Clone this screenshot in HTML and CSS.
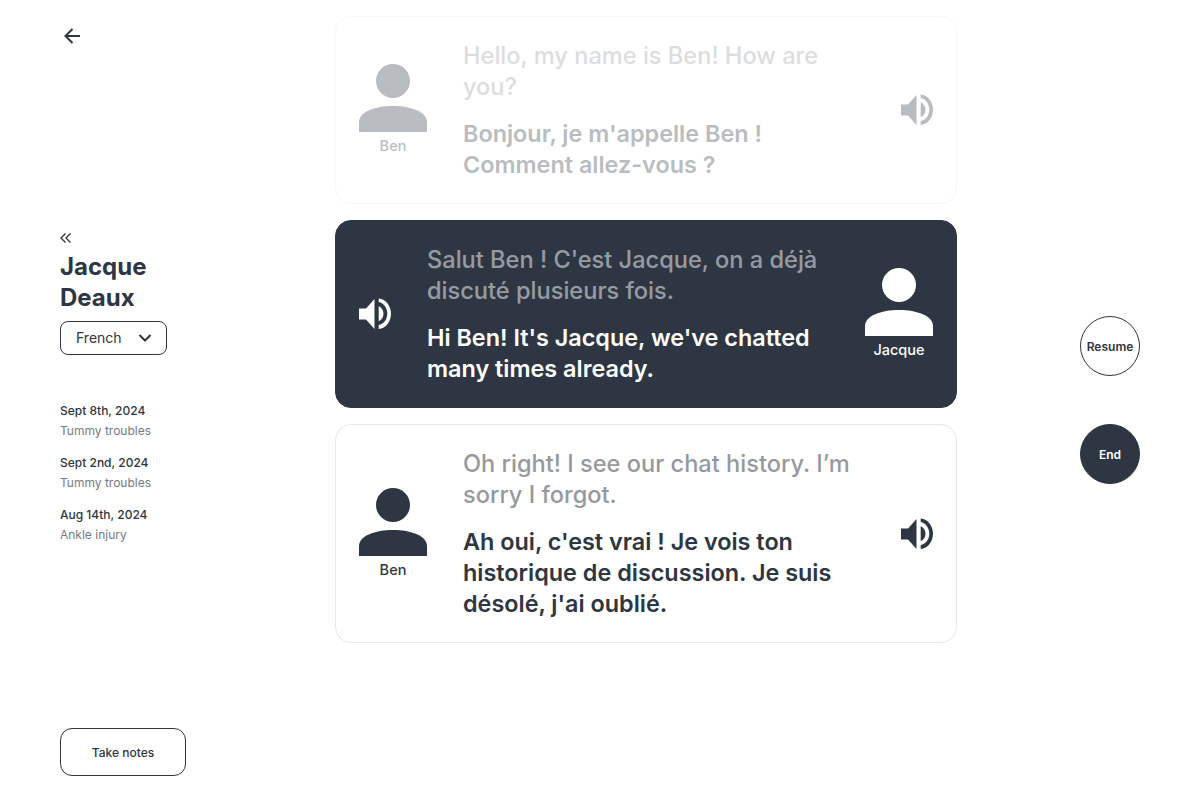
FILE: index.html
```html
<!DOCTYPE html>
<html lang="en">
<head>
    <meta charset="UTF-8">
    <title>Conversation</title>
    <link rel="stylesheet" href="styles.css">
</head>
<body>
    <div class="page">
        <aside class="sidebar">
            <button class="back-btn">
                <svg width="24" height="24" fill="none" stroke="currentColor" viewBox="0 0 24 24">
                    <path stroke-width="2" d="M20 12H5.500M12.500 5l-7 7 7 7"/>
                </svg>
            </button>

            <div class="patient">
                <svg class="collapse-icon" width="12" height="12" fill="none" stroke="currentColor" viewBox="0 0 12 12">
                    <path stroke-width="1.3" d="M5.500 1.500L1 6l4.500 4.500M10.500 1.500L6 6l4.500 4.500"/>
                </svg>
                <h2 class="patient-name">Jacque Deaux</h2>
                <button class="lang-select">
                    French
                    <svg width="14" height="8" fill="none" stroke="currentColor" viewBox="0 0 14 8">
                        <path stroke-width="2" d="M1.500 1L7 6.500 12.500 1"/>
                    </svg>
                </button>
                <div class="history">
                    <div class="history-item">
                        <div class="history-date">Sept 8th, 2024</div>
                        <div class="history-label">Tummy troubles</div>
                    </div>
                    <div class="history-item">
                        <div class="history-date">Sept 2nd, 2024</div>
                        <div class="history-label">Tummy troubles</div>
                    </div>
                    <div class="history-item">
                        <div class="history-date">Aug 14th, 2024</div>
                        <div class="history-label">Ankle injury</div>
                    </div>
                </div>
            </div>

            <button class="notes-btn">Take notes</button>
        </aside>

        <main class="chat">
            <!-- Ben, faded -->
            <div class="bubble faded">
                <div class="speaker">
                    <svg class="avatar" viewBox="0 0 68 68" fill="currentColor">
                        <circle cx="34" cy="17" r="17"/>
                        <path d="M0 68V58C0 48 16 42 34 42s34 6 34 16v10z"/>
                    </svg>
                    <div class="speaker-name">Ben</div>
                </div>
                <div class="bubble-text">
                    <p class="original">Hello, my name is Ben! How are you?</p>
                    <p class="translated">Bonjour, je m'appelle Ben ! Comment allez-vous ?</p>
                </div>
                <svg class="sound" viewBox="0 0 32 32" fill="currentColor">
                    <path d="M0 10.500h7L15.500 1v30L7 21.500H0z"/>
                    <path d="M19.700 8.200c3 1.400 4.800 4.300 4.800 7.500s-1.800 6.100-4.800 7.500z"/>
                    <path d="M19.700 .5C27 1 32 8 32 15.700S27 30.500 19.700 31v-4C25 26 28.300 21 28.300 15.700S25 5 19.700 4z"/>
                </svg>
            </div>

            <!-- Jacque, active -->
            <div class="bubble active">
                <svg class="sound" viewBox="0 0 32 32" fill="currentColor">
                    <path d="M0 10.500h7L15.500 1v30L7 21.500H0z"/>
                    <path d="M19.700 8.200c3 1.400 4.800 4.300 4.800 7.500s-1.800 6.100-4.800 7.500z"/>
                    <path d="M19.700 .5C27 1 32 8 32 15.700S27 30.500 19.700 31v-4C25 26 28.300 21 28.300 15.700S25 5 19.700 4z"/>
                </svg>
                <div class="bubble-text">
                    <p class="original">Salut Ben ! C'est Jacque, on a déjà discuté plusieurs fois.</p>
                    <p class="translated">Hi Ben! It's Jacque, we've chatted many times already.</p>
                </div>
                <div class="speaker">
                    <svg class="avatar" viewBox="0 0 68 68" fill="currentColor">
                        <circle cx="34" cy="17" r="17"/>
                        <path d="M0 68V58C0 48 16 42 34 42s34 6 34 16v10z"/>
                    </svg>
                    <div class="speaker-name">Jacque</div>
                </div>
            </div>

            <!-- Ben -->
            <div class="bubble">
                <div class="speaker">
                    <svg class="avatar" viewBox="0 0 68 68" fill="currentColor">
                        <circle cx="34" cy="17" r="17"/>
                        <path d="M0 68V58C0 48 16 42 34 42s34 6 34 16v10z"/>
                    </svg>
                    <div class="speaker-name">Ben</div>
                </div>
                <div class="bubble-text">
                    <p class="original">Oh right! I see our chat history. I’m sorry I forgot.</p>
                    <p class="translated">Ah oui, c'est vrai ! Je vois ton historique de discussion. Je suis désolé, j'ai oublié.</p>
                </div>
                <svg class="sound" viewBox="0 0 32 32" fill="currentColor">
                    <path d="M0 10.500h7L15.500 1v30L7 21.500H0z"/>
                    <path d="M19.700 8.200c3 1.400 4.800 4.300 4.800 7.500s-1.800 6.100-4.800 7.500z"/>
                    <path d="M19.700 .5C27 1 32 8 32 15.700S27 30.500 19.700 31v-4C25 26 28.300 21 28.300 15.700S25 5 19.700 4z"/>
                </svg>
            </div>
        </main>

        <div class="controls">
            <button class="round-btn">Resume</button>
            <button class="round-btn solid">End</button>
        </div>
    </div>
</body>
</html>
```

FILE: styles.css
```css
:root {
    --ink: #2d3642;
    --surface: #ffffff;
    --border: #e5e7ea;
}

* {
    margin: 0;
    padding: 0;
    box-sizing: border-box;
}

body {
    font-family: Inter, "Open Sans", sans-serif;
    background: var(--surface);
    color: var(--ink);
}

button {
    font-family: inherit;
    color: inherit;
    background: none;
    border: none;
    cursor: pointer;
}

.page {
    height: 800px;
    display: flex;
}

/* left column */
.sidebar {
    width: 335px;
    padding: 24px 0 24px 60px;
    display: flex;
    flex-direction: column;
    justify-content: space-between;
    align-items: flex-start;
}

.back-btn {
    width: 24px;
    height: 24px;
}

.collapse-icon {
    display: block;
    margin-bottom: 7px;
}

.patient-name {
    width: 120px;
    font-size: 24px;
    line-height: 31px;
    font-weight: 700;
}

.lang-select {
    width: 107px;
    height: 34px;
    margin-top: 8px;
    padding: 0 14px 0 15px;
    border: 1px solid var(--ink);
    border-radius: 8px;
    font-size: 14px;
    display: flex;
    justify-content: space-between;
    align-items: center;
}

.history {
    margin-top: 46px;
    display: flex;
    flex-direction: column;
    gap: 12px;
}

.history-date {
    font-size: 12px;
    line-height: 20px;
    font-weight: 500;
}

.history-label {
    font-size: 12px;
    line-height: 20px;
    color: #767b84;
}

.notes-btn {
    width: 126px;
    height: 48px;
    border: 1px solid var(--ink);
    border-radius: 12px;
    font-size: 12px;
    font-weight: 500;
}

/* conversation */
.chat {
    width: 622px;
    padding-top: 16px;
    display: flex;
    flex-direction: column;
    gap: 16px;
}

.bubble {
    padding: 23px;
    border: 1px solid var(--border);
    border-radius: 16px;
    display: flex;
    align-items: center;
    gap: 36px;
}

.bubble.faded {
    opacity: 0.33;
}

.bubble.active {
    background: var(--ink);
    border-color: var(--ink);
    color: white;
}

.speaker {
    width: 68px;
    flex-shrink: 0;
    text-align: center;
}

.avatar {
    display: block;
    width: 68px;
    height: 68px;
}

.speaker-name {
    margin-top: 4px;
    font-size: 14.500px;
    line-height: 20px;
    font-weight: 500;
}

.bubble-text {
    flex: 1;
}

.original {
    font-size: 23.600px;
    line-height: 31px;
    font-weight: 500;
    opacity: 0.5;
}

.translated {
    margin-top: 16px;
    font-size: 23.400px;
    line-height: 31px;
    font-weight: 600;
}

.sound {
    width: 32px;
    height: 32px;
    flex-shrink: 0;
}

/* right column */
.controls {
    margin-left: 123px;
    display: flex;
    flex-direction: column;
    justify-content: center;
    gap: 48px;
}

.round-btn {
    width: 60px;
    height: 60px;
    border: 1px solid var(--ink);
    border-radius: 50%;
    font-size: 12px;
    font-weight: 600;
}

.round-btn.solid {
    background: var(--ink);
    color: white;
}
```
